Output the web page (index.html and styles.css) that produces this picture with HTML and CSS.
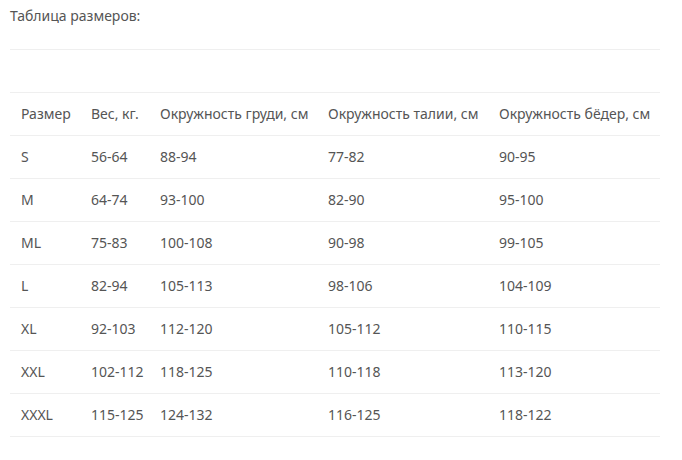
FILE: index.html
```html
<!DOCTYPE html>
<html lang="ru">
<head>
<meta charset="utf-8">
<link rel="stylesheet" href="styles.css">
</head>
<body>
<div class="page">
  <div class="title">Таблица размеров:</div>
  <table class="sizes">
    <thead>
      <tr><th>Размер</th><th>Вес, кг.</th><th>Окружность груди, см</th><th>Окружность талии, см</th><th>Окружность бёдер, см</th></tr>
    </thead>
    <tbody>
      <tr><td>S</td><td>56-64</td><td>88-94</td><td>77-82</td><td>90-95</td></tr>
      <tr><td>M</td><td>64-74</td><td>93-100</td><td>82-90</td><td>95-100</td></tr>
      <tr><td>ML</td><td>75-83</td><td>100-108</td><td>90-98</td><td>99-105</td></tr>
      <tr><td>L</td><td>82-94</td><td>105-113</td><td>98-106</td><td>104-109</td></tr>
      <tr><td>XL</td><td>92-103</td><td>112-120</td><td>105-112</td><td>110-115</td></tr>
      <tr><td>XXL</td><td>102-112</td><td>118-125</td><td>110-118</td><td>113-120</td></tr>
      <tr><td>XXXL</td><td>115-125</td><td>124-132</td><td>116-125</td><td>118-122</td></tr>
    </tbody>
  </table>
</div>
</body>
</html>
```
FILE: styles.css
```css
html, body {
  margin: 0;
  padding: 0;
  background: #fff;
}
body {
  font-family: "Noto Sans", "Open Sans", sans-serif;
  color: #555;
  font-size: 14px;
}
.page {
  padding: 0 22px 0 10px;
}
.title {
  height: 49px;
  line-height: 32px;
  border-bottom: 1px solid #efefef;
  margin-bottom: 42px;
  color: #555;
}
.sizes {
  width: 100%;
  border-collapse: collapse;
  table-layout: fixed;
}
.sizes th, .sizes td {
  font-weight: normal;
  text-align: left;
  height: 40px;
  padding: 0 0 2px 11px;
  border-top: 1px solid #efefef;
  border-bottom: 1px solid #efefef;
  white-space: nowrap;
  vertical-align: middle;
}
.sizes th:nth-child(1), .sizes td:nth-child(1) { width: 59px; }
.sizes th:nth-child(2), .sizes td:nth-child(2) { width: 58px; }
.sizes th:nth-child(3), .sizes td:nth-child(3) { width: 157px; }
.sizes th:nth-child(4), .sizes td:nth-child(4) { width: 160px; }
```
